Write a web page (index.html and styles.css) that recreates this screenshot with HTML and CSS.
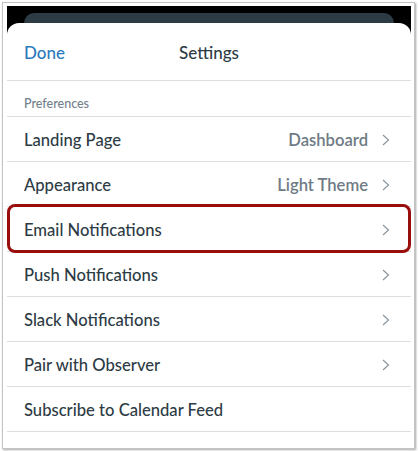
FILE: index.html
```html
<!DOCTYPE html>
<html lang="en">
<head>
    <meta charset="UTF-8">
    <meta name="viewport" content="width=device-width, initial-scale=1.0">
    <title>Settings</title>
    <link rel="stylesheet" href="styles.css">
</head>
<body>

    <div class="frame">
        <div class="screen">
            <!-- page behind the modal sheet -->
            <div class="back-card"></div>

            <div class="sheet">
                <div class="sheet-header">
                    <span class="done">Done</span>
                    <span class="title">Settings</span>
                    <span></span>
                </div>

                <div class="section-title">Preferences</div>

                <div class="row">
                    <span class="label">Landing Page</span>
                    <span class="value">Dashboard</span>
                    <svg class="chevron" viewBox="0 0 8 12"><polyline points="1,1 6.5,6 1,11"/></svg>
                </div>
                <div class="row">
                    <span class="label">Appearance</span>
                    <span class="value">Light Theme</span>
                    <svg class="chevron" viewBox="0 0 8 12"><polyline points="1,1 6.5,6 1,11"/></svg>
                </div>
                <div class="row highlighted">
                    <span class="label">Email Notifications</span>
                    <svg class="chevron" viewBox="0 0 8 12"><polyline points="1,1 6.5,6 1,11"/></svg>
                </div>
                <div class="row">
                    <span class="label">Push Notifications</span>
                    <svg class="chevron" viewBox="0 0 8 12"><polyline points="1,1 6.5,6 1,11"/></svg>
                </div>
                <div class="row">
                    <span class="label">Slack Notifications</span>
                    <svg class="chevron" viewBox="0 0 8 12"><polyline points="1,1 6.5,6 1,11"/></svg>
                </div>
                <div class="row">
                    <span class="label">Pair with Observer</span>
                    <svg class="chevron" viewBox="0 0 8 12"><polyline points="1,1 6.5,6 1,11"/></svg>
                </div>
                <div class="row">
                    <span class="label">Subscribe to Calendar Feed</span>
                </div>
            </div>
        </div>
    </div>

</body>
</html>
```

FILE: styles.css
```css
* {
    margin: 0;
    padding: 0;
    box-sizing: border-box;
}

body {
    font-family: 'Lato', 'Liberation Sans', sans-serif;
    background-color: #fff;
    color: #2d3b45;
    width: 418px;
    height: 451px;
    overflow: hidden;
}

.frame {
    margin: 2px 0 0 2px;
    width: 413px;
    height: 447px;
    border: 1px solid #c4c4c4;
    box-shadow: 1px 1px 2px rgba(0, 0, 0, 0.35);
    padding: 3px 3px 0 4px;
    background-color: #fff;
}

.screen {
    background-color: #000;
    padding-top: 7px;
    height: 442px;
    overflow: hidden;
}

.back-card {
    margin: 0 17px;
    height: 10px;
    background-color: #2d3b45;
    border-radius: 10px 10px 0 0;
}

.sheet {
    background-color: #fff;
    border-radius: 12px 12px 0 0;
    height: 425px;
}

.sheet-header {
    display: grid;
    grid-template-columns: 1fr auto 1fr;
    align-items: center;
    height: 58px;
    padding: 1px 17px 0;
    border-bottom: 1px solid #dcdfe1;
}

.done {
    font-size: 17px;
    font-weight: 500;
    color: #2b7abc;
}

.title {
    font-size: 17px;
    font-weight: 500;
    color: #2d3b45;
}

.section-title {
    display: flex;
    align-items: flex-end;
    height: 36px;
    padding: 0 17px 5px;
    font-size: 12.5px;
    font-weight: 500;
    color: #73818c;
    border-bottom: 1px solid #dcdfe1;
}

.row {
    position: relative;
    display: flex;
    align-items: center;
    height: 45px;
    padding: 2px 21px 0 17px;
    border-bottom: 1px solid #dcdfe1;
    font-size: 16.6px;
    font-weight: 500;
}

.row:first-of-type {
    height: 46px;
}

.label {
    flex: 1;
}

.value {
    color: #6e7b85;
    font-weight: 600;
    margin-right: 14px;
}

.chevron {
    width: 8px;
    height: 12px;
    fill: none;
    stroke: #8b969e;
    stroke-width: 1.2;
}

/* red callout drawn over the row */
.highlighted::after {
    content: '';
    position: absolute;
    top: -3px;
    left: 0;
    right: 0;
    bottom: -2px;
    border: 3px solid #990d0d;
    border-radius: 8px;
}
```
